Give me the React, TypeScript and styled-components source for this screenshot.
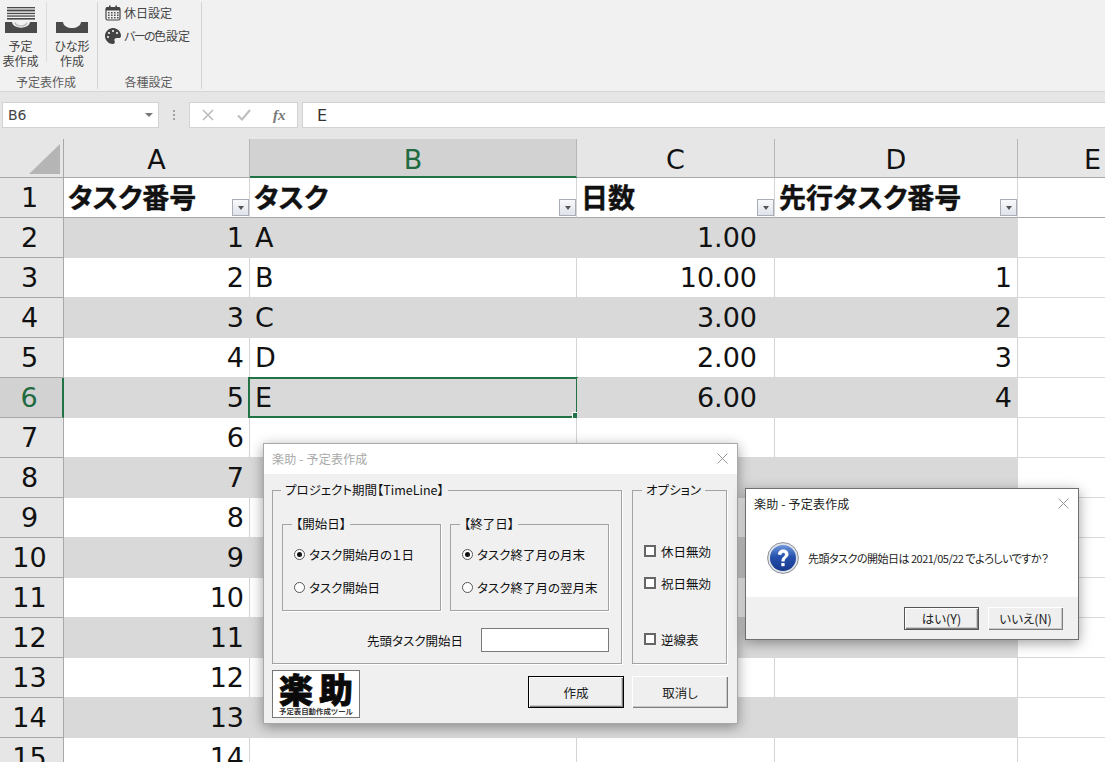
import React from 'react';
import styled, { createGlobalStyle } from 'styled-components';
import { FaPalette } from 'react-icons/fa';

const Global = createGlobalStyle`
  html, body { margin: 0; padding: 0; height: 100%; background: #fff; overflow: hidden; }
  * { box-sizing: border-box; }
  body { font-family: "Noto Sans CJK JP", "Noto Sans", sans-serif; }
`;

const SHEET_FONT = `"DejaVu Sans", "Noto Sans CJK JP", sans-serif`;

const Page = styled.div`
  position: relative;
  width: 1105px;
  height: 762px;
  overflow: hidden;
  display: flex;
  flex-direction: column;
`;

/* Ribbon */
const Ribbon = styled.div`
  height: 92px;
  background: #f1f1f1;
  border-bottom: 1px solid #d6d6d6;
  display: flex;
  flex: none;
  font-feature-settings: "palt";
`;
const RibbonGroup = styled.div<{ $w: number }>`
  width: ${p => p.$w}px;
  height: 87px;
  margin-top: 2px;
  border-right: 1px solid #d4d4d4;
  display: flex;
  flex-direction: column;
`;
const GroupBody = styled.div`
  flex: 1;
  display: flex;
`;
const GroupLabel = styled.div<{ $shift: number }>`
  height: 15px;
  font-size: 12px;
  line-height: 15px;
  text-align: center;
  padding-right: ${p => p.$shift}px;
  color: #5c5c5c;
  font-feature-settings: normal;
`;
const BigButton = styled.div<{ $w: number; $sep?: boolean }>`
  width: ${p => p.$w}px;
  display: flex;
  flex-direction: column;
  align-items: center;
  padding-top: 5px;
  font-size: 12px;
  line-height: 15px;
  color: #444;
  text-align: center;
  white-space: nowrap;
  ${p => p.$sep ? 'border-right: 1px solid #dcdcdc; height: 60px; padding-right: 5px;' : ''}
  svg { margin-bottom: 4px; flex: none; }
`;
const SmallColumn = styled.div`
  display: flex;
  flex-direction: column;
  gap: 4px;
  padding: 1px 0 0 7px;
`;
const SmallButton = styled.div`
  display: flex;
  align-items: center;
  gap: 3px;
  height: 19px;
  font-size: 12px;
  color: #444;
  white-space: nowrap;
`;
const NarrowKana = styled.span`
  letter-spacing: -1.6px;
`;

/* Formula bar */
const FormulaBar = styled.div`
  height: 47px;
  background: #e6e6e6;
  display: flex;
  align-items: flex-start;
  padding: 10px 0 0 2px;
  flex: none;
`;
const NameBox = styled.div`
  width: 157px;
  height: 26px;
  background: #fff;
  border: 1px solid #d2d2d2;
  display: flex;
  align-items: center;
  justify-content: space-between;
  padding: 0 5px 0 5px;
  font-family: "DejaVu Sans", sans-serif;
  font-size: 14px;
  color: #444;
`;
const Caret = styled.span`
  width: 0;
  height: 0;
  border-left: 4px solid transparent;
  border-right: 4px solid transparent;
  border-top: 4px solid #777;
`;
const Dots = styled.div`
  width: 30px;
  height: 26px;
  display: flex;
  flex-direction: column;
  align-items: center;
  justify-content: center;
  gap: 2px;
  span { width: 2px; height: 2px; background: #a0a0a0; }
`;
const FxBox = styled.div`
  width: 109px;
  height: 26px;
  background: #fff;
  border: 1px solid #d2d2d2;
  display: flex;
  align-items: center;
  margin-right: 4px;
`;
const FxIcon = styled.div<{ $dark?: boolean }>`
  width: 36px;
  display: flex;
  align-items: center;
  justify-content: center;
  color: ${p => p.$dark ? '#777' : '#bdbdbd'};
  font-family: "Liberation Serif", serif;
  font-style: italic;
  font-weight: 700;
  font-size: 15px;
  line-height: 1;
`;
const FormulaInput = styled.div`
  flex: 1;
  height: 26px;
  background: #fff;
  border: 1px solid #d2d2d2;
  border-right: none;
  display: flex;
  align-items: center;
  padding-left: 14px;
  font-family: "DejaVu Sans", sans-serif;
  font-size: 16px;
  color: #333;
`;

/* Sheet */
const Sheet = styled.div`
  display: grid;
  grid-template-columns: 64px 186px 327px 198px 243px 150px;
  grid-template-rows: 39px repeat(15, 40px);
  font-family: ${SHEET_FONT};
  color: #111;
  position: relative;
`;
const Corner = styled.div`
  background: #e6e6e6;
  border-right: 1px solid #a8a8a8;
  border-bottom: 1px solid #a8a8a8;
  position: relative;
  &::after {
    content: '';
    position: absolute;
    right: 3px;
    bottom: 3px;
    width: 0;
    height: 0;
    border-style: solid;
    border-width: 0 0 30px 31px;
    border-color: transparent transparent #b5b5b5 transparent;
  }
`;
const ColHead = styled.div<{ $on?: boolean }>`
  background: ${p => p.$on ? '#d2d2d2' : '#e6e6e6'};
  color: ${p => p.$on ? '#1f6b41' : '#111'};
  border-right: 1px solid #b6b6b6;
  border-bottom: ${p => p.$on ? '2px solid #217346' : '1px solid #a8a8a8'};
  display: flex;
  align-items: center;
  justify-content: center;
  padding-top: 3px;
  font-size: 27px;
  font-weight: 400;
  line-height: 1;
`;
const RowHead = styled.div<{ $on?: boolean }>`
  background: ${p => p.$on ? '#d2d2d2' : '#e6e6e6'};
  color: ${p => p.$on ? '#1f6b41' : '#111'};
  border-right: ${p => p.$on ? '2px solid #217346' : '1px solid #a8a8a8'};
  border-bottom: 1px solid #a8a8a8;
  display: flex;
  align-items: center;
  justify-content: center;
  padding-right: 4px;
  font-size: 27px;
  line-height: 1;
`;
const Cell = styled.div<{ $band?: boolean; $num?: boolean; $pad?: number; $lineBottom?: boolean }>`
  background: ${p => p.$band ? '#d9d9d9' : '#fff'};
  border-right: 1px solid ${p => p.$band ? '#d9d9d9' : '#d4d4d4'};
  border-bottom: 1px solid ${p => p.$lineBottom ? '#a8a8a8' : '#d9d9d9'};
  display: flex;
  align-items: center;
  justify-content: ${p => p.$num ? 'flex-end' : 'flex-start'};
  padding: ${p => p.$num ? `0 ${p.$pad ?? 5}px 0 0` : '0 0 0 5px'};
  font-size: 27px;
  line-height: 1;
  position: relative;
`;
const HeadCell = styled(Cell)`
  font-family: "Noto Sans CJK JP", sans-serif;
  font-weight: 700;
  font-size: 27px;
  font-feature-settings: "palt";
  -webkit-text-stroke: 0.4px #111;
  padding-left: 4px;
  padding-bottom: 3px;
  white-space: nowrap;
`;
const Filter = styled.span`
  position: absolute;
  right: 0;
  bottom: 1px;
  width: 17px;
  height: 17px;
  background: linear-gradient(#f8f9fb, #dfe3ea);
  border: 1px solid #a9aeb6;
  display: flex;
  align-items: center;
  justify-content: center;
  -webkit-text-stroke: 0;
  &::after {
    content: '';
    width: 0;
    height: 0;
    border-left: 3.5px solid transparent;
    border-right: 3.5px solid transparent;
    border-top: 4px solid #555;
  }
`;
const Selected = styled.span`
  position: absolute;
  inset: -1px -2px -1px -2px;
  border: 2px solid #217346;
  pointer-events: none;
  &::after {
    content: '';
    position: absolute;
    right: -4px;
    bottom: -4px;
    width: 6px;
    height: 6px;
    background: #217346;
    border: 1px solid #fff;
  }
`;

/* Dialogs */
const Dialog = styled.div<{ $x: number; $y: number; $w: number; $h: number; $dark?: boolean }>`
  position: absolute;
  left: ${p => p.$x}px;
  top: ${p => p.$y}px;
  width: ${p => p.$w}px;
  height: ${p => p.$h}px;
  background: #f0f0f0;
  border: 1px solid ${p => p.$dark ? '#6f6f6f' : '#a8a8a8'};
  box-shadow: 0 3px 12px rgba(0, 0, 0, 0.38);
  display: flex;
  flex-direction: column;
  font-size: 12.5px;
  color: #111;
  font-feature-settings: "palt";
`;
const TitleBar = styled.div<{ $active?: boolean }>`
  height: 30px;
  flex: none;
  background: #fff;
  display: flex;
  align-items: center;
  justify-content: space-between;
  padding: 0 9px 2px 8px;
  color: ${p => p.$active ? '#222' : '#a8a8a8'};
  font-size: 12px;
  letter-spacing: 0.2px;
  font-feature-settings: normal;
`;
const Close = () => (
  <svg width="11" height="11" viewBox="0 0 11 11">
    <path d="M0.5 0.5 L10.5 10.5 M10.5 0.5 L0.5 10.5" stroke="#9a9a9a" strokeWidth="1" fill="none" />
  </svg>
);
const MainBody = styled.div`
  flex: 1;
  display: grid;
  grid-template-columns: 350px 95px;
  grid-template-rows: 182px 1fr;
  column-gap: 10px;
  padding: 8px 10px 5px 8px;
`;
const Group = styled.fieldset`
  margin: 0;
  padding: 0;
  min-width: 0;
  border: 1px solid #a3a3a3;
  box-shadow: 1px 1px 0 #fff;
  position: relative;
  display: flex;
`;
const Legend = styled.legend<{ $ml: number }>`
  margin-left: ${p => p.$ml}px;
  padding: 0 4px;
  font-size: 12.5px;
  line-height: 14px;
  white-space: nowrap;
`;
const ProjectBox = styled(Group)`
  height: 181px;
  margin-top: 1px;
`;
const ProjectInner = styled.div`
  width: 100%;
  padding: 20px 12px 0 9px;
  display: flex;
  flex-direction: column;
`;
const DateRow = styled.div`
  display: flex;
  gap: 9px;
`;
const DateBox = styled(Group)`
  flex: 1;
  height: 94px;
  flex-direction: column;
`;
const DateInner = styled.div`
  display: flex;
  flex-direction: column;
  gap: 17px;
  padding: 15px 0 0 11px;
`;
const Choice = styled.label`
  display: flex;
  align-items: center;
  gap: 4px;
  height: 16px;
  white-space: nowrap;
`;
const Radio = styled.span<{ $on?: boolean }>`
  width: 11px;
  height: 11px;
  border-radius: 50%;
  border: 1.5px solid #555;
  background: #fff;
  display: flex;
  align-items: center;
  justify-content: center;
  flex: none;
  &::after {
    content: '';
    display: ${p => p.$on ? 'block' : 'none'};
    width: 5px;
    height: 5px;
    border-radius: 50%;
    background: #111;
  }
`;
const StartRow = styled.div`
  display: flex;
  align-items: center;
  justify-content: flex-end;
  gap: 18px;
  margin-top: 17px;
`;
const DateInput = styled.div`
  width: 128px;
  height: 24px;
  background: #fff;
  border: 1px solid #7a7a7a;
`;
const OptionBox = styled(Group)`
  height: 181px;
  margin-top: 1px;
  flex-direction: column;
`;
const OptionInner = styled.div`
  display: flex;
  flex-direction: column;
  padding: 46px 0 0 11px;
`;
const Check = styled.span`
  width: 12px;
  height: 12px;
  background: #fff;
  border: 2px solid #666;
  flex: none;
`;
const OptionItem = styled(Choice)<{ $mt?: number }>`
  margin-top: ${p => p.$mt ?? 0}px;
  gap: 5px;
`;
const Footer = styled.div`
  grid-column: 1 / -1;
  display: flex;
  align-items: flex-start;
  padding-top: 6px;
`;
const Logo = styled.div`
  width: 88px;
  height: 48px;
  background: #fff;
  border: 1px solid #777;
  display: flex;
  flex-direction: column;
  align-items: center;
  color: #0a0a0a;
  font-feature-settings: normal;
`;
const LogoMain = styled.div`
  font-size: 34px;
  font-weight: 900;
  line-height: 34px;
  height: 34px;
  letter-spacing: 6px;
  padding-left: 6px;
  margin-top: 1px;
  white-space: nowrap;
  -webkit-text-stroke: 0.8px #0a0a0a;
`;
const LogoSub = styled.div`
  font-size: 7.4px;
  font-weight: 700;
  line-height: 8px;
  margin-top: 1px;
  white-space: nowrap;
  color: #333;
`;
const FooterButtons = styled.div`
  margin-left: auto;
  margin-right: -1px;
  margin-top: 6px;
  display: flex;
  gap: 8px;
`;
const WinButton = styled.div<{ $w: number; $h: number; $ring?: string }>`
  width: ${p => p.$w}px;
  height: ${p => p.$h}px;
  background: #efefef;
  border: ${p => p.$ring ? `1px solid ${p.$ring}` : 'none'};
  box-shadow: inset 1px 1px 0 #fff, inset -1px -1px 0 #7e7e7e, inset -2px -2px 0 #c9c9c9;
  display: flex;
  align-items: center;
  justify-content: center;
  font-size: 12.5px;
  color: #222;
`;
const MsgBody = styled.div`
  height: 78px;
  background: #fff;
  flex: none;
  display: flex;
  align-items: center;
  gap: 9px;
  padding: 0 0 0 21px;
  font-size: 11px;
  letter-spacing: -0.5px;
  color: #222;
  white-space: nowrap;
`;
const MsgFooter = styled.div`
  flex: 1;
  background: #f0f0f0;
  display: flex;
  justify-content: flex-end;
  align-items: center;
  gap: 9px;
  padding: 0 15px 0 0;
`;

const TrayIcon = () => (
  <svg width="32" height="27" viewBox="0 0 32 27">
    <g fill="#4a4a4a">
      <rect x="2" y="0" width="28" height="1.3" />
      <rect x="2" y="2.6" width="28" height="1.8" />
      <rect x="2" y="5.8" width="28" height="1.3" />
      <rect x="2" y="8.4" width="28" height="1.3" />
      <rect x="2" y="11" width="28" height="1.6" />
      <path d="M0 15 H7 C8 22.5 24 22.5 25 15 H32 V26 H0 Z" />
    </g>
    <path d="M10 15.5 C11 20 21 20 22 15.5" fill="none" stroke="#bdbdbd" strokeWidth="1.4" />
  </svg>
);
const ScoopIcon = () => (
  <svg width="32" height="27" viewBox="0 0 32 27">
    <path d="M0 15 H7 C8 23 24 23 25 15 H32 V26 H0 Z" fill="#4a4a4a" />
  </svg>
);
const CalendarIcon = () => (
  <svg width="16" height="16" viewBox="0 0 16 16">
    <rect x="1" y="2.5" width="14" height="12.5" rx="1.5" fill="none" stroke="#444" strokeWidth="1.2" />
    <rect x="1" y="2.5" width="14" height="3" fill="#444" />
    <rect x="4" y="0.5" width="1.6" height="3.5" fill="#444" />
    <rect x="10.4" y="0.5" width="1.6" height="3.5" fill="#444" />
    <g fill="#555">
      {[3, 6, 9, 12].flatMap(x => [7, 9.5, 12].map(y => <rect key={`${x}-${y}`} x={x} y={y} width="1.6" height="1.5" />))}
    </g>
  </svg>
);
const QuestionIcon = () => (
  <svg width="32" height="32" viewBox="0 0 32 32">
    <defs>
      <linearGradient id="qb" x1="0" y1="0" x2="0" y2="1">
        <stop offset="0%" stopColor="#6f97dd" />
        <stop offset="45%" stopColor="#2752ad" />
        <stop offset="100%" stopColor="#16388d" />
      </linearGradient>
    </defs>
    <circle cx="16" cy="16" r="15.4" fill="#dfe2e8" stroke="#8d929c" strokeWidth="1" />
    <circle cx="16" cy="16" r="13" fill="url(#qb)" />
    <path d="M11 12.5 C11 6 21.5 6 21.5 12.3 C21.5 15.8 17.6 16 17.6 19.4 H14.4 C14.4 14.8 18 14.6 18 12.4 C18 10 14.4 10.2 14.3 12.9 Z" fill="#fff" />
    <rect x="14.3" y="21" width="3.3" height="3.2" fill="#fff" />
  </svg>
);

const rows: [string, string, string, string][] = [
  ['1', 'A', '1.00', ''],
  ['2', 'B', '10.00', '1'],
  ['3', 'C', '3.00', '2'],
  ['4', 'D', '2.00', '3'],
  ['5', 'E', '6.00', '4'],
  ['6', '', '', ''],
  ['7', '', '', ''],
  ['8', '', '', ''],
  ['9', '', '', ''],
  ['10', '', '', ''],
  ['11', '', '', ''],
  ['12', '', '', ''],
  ['13', '', '', ''],
  ['14', '', '', ''],
];

export default function App() {
  return (
    <Page>
      <Global />
      <Ribbon>
        <RibbonGroup $w={98}>
          <GroupBody>
            <BigButton $w={47} $sep>
              <TrayIcon />
              <span>予定<br />表作成</span>
            </BigButton>
            <BigButton $w={50}>
              <ScoopIcon />
              <span>ひな形<br />作成</span>
            </BigButton>
          </GroupBody>
          <GroupLabel $shift={5}>予定表作成</GroupLabel>
        </RibbonGroup>
        <RibbonGroup $w={104}>
          <GroupBody>
            <SmallColumn>
              <SmallButton><CalendarIcon />休日設定</SmallButton>
              <SmallButton>
                <FaPalette size={16} color="#444" />
                <span><NarrowKana>バーの</NarrowKana>色設定</span>
              </SmallButton>
            </SmallColumn>
          </GroupBody>
          <GroupLabel $shift={2}>各種設定</GroupLabel>
        </RibbonGroup>
      </Ribbon>
      <FormulaBar>
        <NameBox>B6<Caret /></NameBox>
        <Dots><span /><span /><span /></Dots>
        <FxBox>
          <FxIcon>
            <svg width="12" height="12" viewBox="0 0 12 12"><path d="M1 1 L11 11 M11 1 L1 11" stroke="#bdbdbd" strokeWidth="1.6" /></svg>
          </FxIcon>
          <FxIcon>
            <svg width="14" height="12" viewBox="0 0 14 12"><path d="M1 6.5 L5 10.5 L13 1" stroke="#bdbdbd" strokeWidth="2" fill="none" /></svg>
          </FxIcon>
          <FxIcon $dark>fx</FxIcon>
        </FxBox>
        <FormulaInput>E</FormulaInput>
      </FormulaBar>
      <Sheet>
        <Corner />
        <ColHead>A</ColHead>
        <ColHead $on>B</ColHead>
        <ColHead>C</ColHead>
        <ColHead>D</ColHead>
        <ColHead>E</ColHead>

        <RowHead>1</RowHead>
        <HeadCell $lineBottom>タスク番号<Filter /></HeadCell>
        <HeadCell $lineBottom>タスク<Filter /></HeadCell>
        <HeadCell $lineBottom>日数<Filter /></HeadCell>
        <HeadCell $lineBottom>先行タスク番号<Filter /></HeadCell>
        <Cell $lineBottom />

        {rows.map((r, i) => {
          const band = i % 2 === 0;
          return (
            <React.Fragment key={i}>
              <RowHead $on={i === 4}>{i + 2}</RowHead>
              <Cell $band={band} $num>{r[0]}</Cell>
              <Cell $band={band}>
                {r[1]}
                {i === 4 && <Selected />}
              </Cell>
              <Cell $band={band} $num $pad={17}>{r[2]}</Cell>
              <Cell $band={band} $num>{r[3]}</Cell>
              <Cell />
            </React.Fragment>
          );
        })}
      </Sheet>

      <Dialog $x={263} $y={443} $w={475} $h={281}>
        <TitleBar>楽助 - 予定表作成<Close /></TitleBar>
        <MainBody>
          <ProjectBox>
            <Legend $ml={8}>プロジェクト期間【TimeLine】</Legend>
            <ProjectInner>
              <DateRow>
                <DateBox>
                  <Legend $ml={9}>【開始日】</Legend>
                  <DateInner>
                    <Choice><Radio $on />タスク開始月の１日</Choice>
                    <Choice><Radio />タスク開始日</Choice>
                  </DateInner>
                </DateBox>
                <DateBox>
                  <Legend $ml={9}>【終了日】</Legend>
                  <DateInner>
                    <Choice><Radio $on />タスク終了月の月末</Choice>
                    <Choice><Radio />タスク終了月の翌月末</Choice>
                  </DateInner>
                </DateBox>
              </DateRow>
              <StartRow>
                先頭タスク開始日
                <DateInput />
              </StartRow>
            </ProjectInner>
          </ProjectBox>
          <OptionBox>
            <Legend $ml={9}>オプション</Legend>
            <OptionInner>
              <OptionItem><Check />休日無効</OptionItem>
              <OptionItem $mt={16}><Check />祝日無効</OptionItem>
              <OptionItem $mt={40}><Check />逆線表</OptionItem>
            </OptionInner>
          </OptionBox>
          <Footer>
            <Logo>
              <LogoMain>楽助</LogoMain>
              <LogoSub>予定表自動作成ツール</LogoSub>
            </Logo>
            <FooterButtons>
              <WinButton $w={96} $h={32} $ring="#000">作成</WinButton>
              <WinButton $w={96} $h={32}>取消し</WinButton>
            </FooterButtons>
          </Footer>
        </MainBody>
      </Dialog>

      <Dialog $x={745} $y={488} $w={334} $h={152} $dark>
        <TitleBar $active>楽助 - 予定表作成<Close /></TitleBar>
        <MsgBody>
          <QuestionIcon />
          先頭タスクの開始日は 2021/05/22 でよろしいですか？
        </MsgBody>
        <MsgFooter>
          <WinButton $w={75} $h={23} $ring="#555">はい(Y)</WinButton>
          <WinButton $w={75} $h={23}>いいえ(N)</WinButton>
        </MsgFooter>
      </Dialog>
    </Page>
  );
}
